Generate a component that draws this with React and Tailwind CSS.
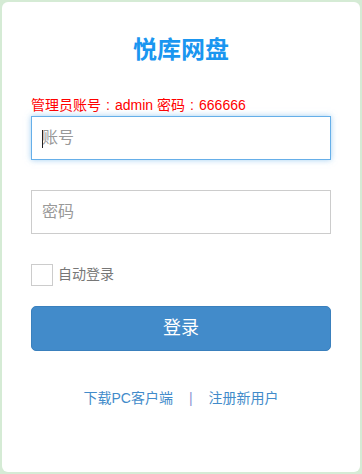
import React from "react";

export default function App() {
  const font = { fontFamily: '"Liberation Sans", "Noto Sans CJK SC", sans-serif' };
  const colon = <span className="inline-block w-[14px] text-center">:</span>;
  return (
    <div className="w-[362px] h-[474px] bg-[#d5ebd5] p-[2px]" style={font}>
      <div className="w-full h-full bg-white rounded-[6px] px-[29px] pt-[32px] flex flex-col">
        <h1 className="text-center text-[24px] leading-[32px] font-bold text-[#1a96f0]">悦库网盘</h1>
        <div className="mt-[29px] text-[14px] leading-[20px] text-[#ff0000]">管理员账号{colon}admin 密码{colon}666666</div>
        <div className="relative mt-[1px] h-[44px] border border-[#66afe9] shadow-[0_0_6px_rgba(102,175,233,0.6)] flex items-center px-[10px]">
          <span className="absolute left-[10px] top-[13px] w-[1px] h-[18px] bg-[#222]"></span>
          <span className="text-[16px] text-[#999]">账号</span>
        </div>
        <div className="mt-[30px] h-[44px] border border-[#ccc] flex items-center px-[10px]">
          <span className="text-[16px] text-[#999]">密码</span>
        </div>
        <div className="mt-[30px] flex items-center h-[22px]">
          <span className="w-[22px] h-[22px] border border-[#ccc] bg-white"></span>
          <span className="ml-[5px] text-[14px] leading-[20px] -mt-[2px] text-[#777]">自动登录</span>
        </div>
        <div className="mt-[20px] h-[45px] rounded-[5px] bg-[#428bca] border border-[#3a80bd] flex items-center justify-center text-white text-[18px]">登录</div>
        <div className="mt-[37px] flex justify-center items-center gap-[16px] text-[14px] leading-[20px] text-[#428bca]">
          <span>下载PC客户端</span>
          <span className="text-[#8a94d4]">|</span>
          <span>注册新用户</span>
        </div>
      </div>
    </div>
  );
}
